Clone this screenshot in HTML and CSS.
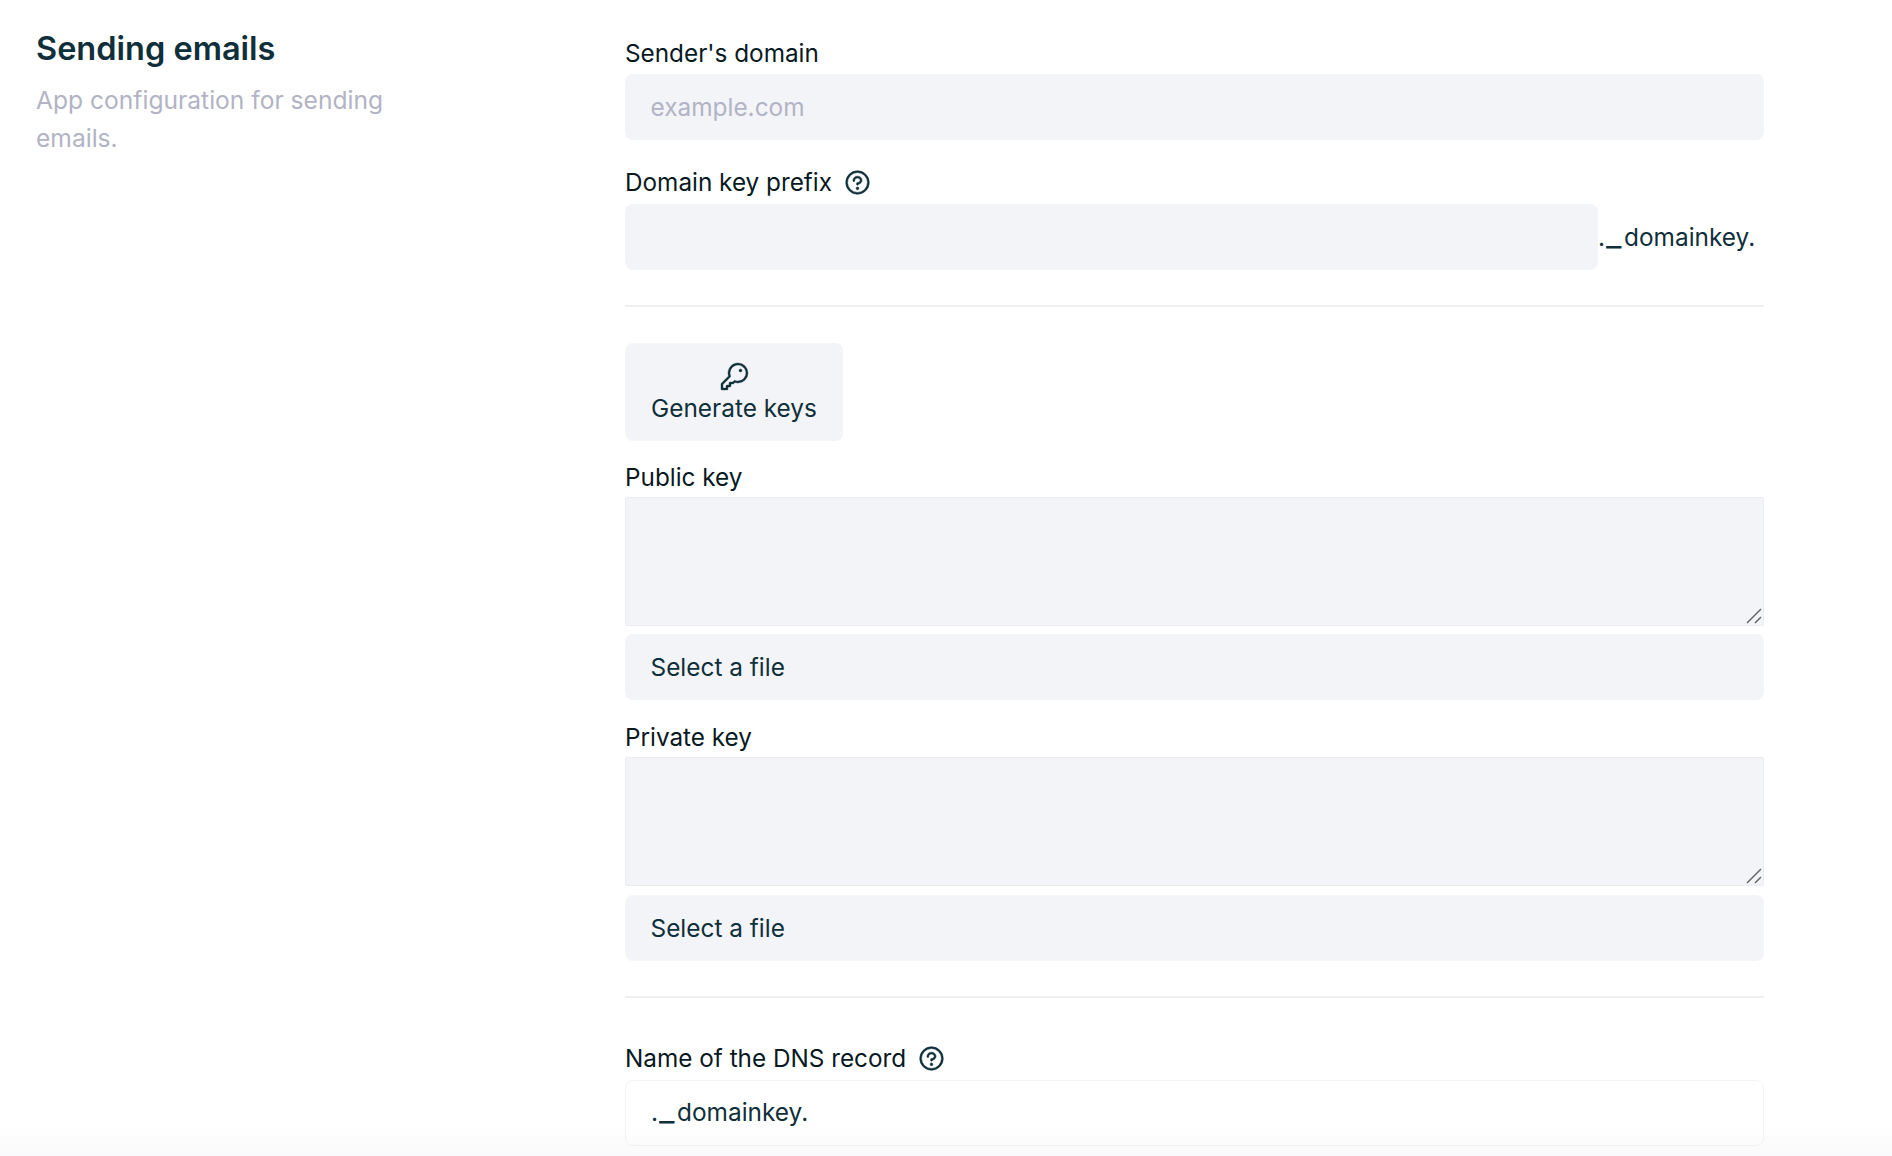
FILE: index.html
```html
<!DOCTYPE html>
<html lang="en">
<head>
<meta charset="utf-8">
<title>Sending emails</title>
<link rel="stylesheet" href="styles.css">
</head>
<body>
<main class="page">
  <aside class="intro">
    <h1 class="intro-title">Sending emails</h1>
    <p class="intro-text">App configuration for sending emails.</p>
  </aside>
  <form class="form">
    <div class="field field-first">
      <label class="label">Sender's domain</label>
      <input class="input" type="text" placeholder="example.com">
    </div>
    <div class="field field-prefix">
      <label class="label">Domain key prefix
        <svg class="help" viewBox="0 0 256 256" aria-hidden="true"><path d="M140,180a12,12,0,1,1-12-12A12,12,0,0,1,140,180ZM128,72c-22.06,0-40,16.15-40,36v4a8,8,0,0,0,16,0v-4c0-11,10.77-20,24-20s24,9,24,20-10.77,20-24,20a8,8,0,0,0-8,8v8a8,8,0,0,0,16,0v-.72c18.24-3.35,32-17.9,32-35.28C168,88.15,150.06,72,128,72Zm104,56A104,104,0,1,1,128,24,104.11,104.11,0,0,1,232,128Zm-16,0a88,88,0,1,0-88,88A88.1,88.1,0,0,0,216,128Z"/></svg>
      </label>
      <div class="input-row">
        <input class="input input-grow" type="text">
        <span class="suffix">.<span class="wide">_</span>domainkey.</span>
      </div>
    </div>
    <hr class="divider divider-first">
    <button class="generate" type="button">
      <svg class="key" viewBox="0 0 256 256" aria-hidden="true"><path d="M160,16A80.07,80.07,0,0,0,83.91,120.78L26.34,178.34A8,8,0,0,0,24,184v40a8,8,0,0,0,8,8H72a8,8,0,0,0,8-8V208H96a8,8,0,0,0,8-8V184h16a8,8,0,0,0,5.66-2.34l9.56-9.57A79.73,79.73,0,0,0,160,176h.1A80,80,0,0,0,160,16Zm0,144a63.7,63.7,0,0,1-23.65-4.51,8,8,0,0,0-8.84,1.68L116.69,168H96a8,8,0,0,0-8,8v16H72a8,8,0,0,0-8,8v16H40V187.31l58.83-58.82a8,8,0,0,0,1.68-8.84A64,64,0,1,1,160,160Zm32-84a12,12,0,1,1-12-12A12,12,0,0,1,192,76Z"/></svg>
      <span>Generate keys</span>
    </button>
    <div class="field field-key field-public">
      <label class="label label-tight">Public key</label>
      <div class="textarea-wrap">
        <textarea class="textarea"></textarea>
        <svg class="grip" viewBox="0 0 20 20" aria-hidden="true"><path d="M3 17 17 3M11 17l6-6"/></svg>
      </div>
      <div class="file">Select a file</div>
    </div>
    <div class="field field-key field-private">
      <label class="label label-tight">Private key</label>
      <div class="textarea-wrap">
        <textarea class="textarea"></textarea>
        <svg class="grip" viewBox="0 0 20 20" aria-hidden="true"><path d="M3 17 17 3M11 17l6-6"/></svg>
      </div>
      <div class="file">Select a file</div>
    </div>
    <hr class="divider divider-second">
    <div class="field field-dns">
      <label class="label">Name of the DNS record
        <svg class="help" viewBox="0 0 256 256" aria-hidden="true"><path d="M140,180a12,12,0,1,1-12-12A12,12,0,0,1,140,180ZM128,72c-22.06,0-40,16.15-40,36v4a8,8,0,0,0,16,0v-4c0-11,10.77-20,24-20s24,9,24,20-10.77,20-24,20a8,8,0,0,0-8,8v8a8,8,0,0,0,16,0v-.72c18.24-3.35,32-17.9,32-35.28C168,88.15,150.06,72,128,72Zm104,56A104,104,0,1,1,128,24,104.11,104.11,0,0,1,232,128Zm-16,0a88,88,0,1,0-88,88A88.1,88.1,0,0,0,216,128Z"/></svg>
      </label>
      <div class="readonly">.<span class="wide">_</span>domainkey.</div>
    </div>
  </form>
</main>
<div class="fade"></div>
</body>
</html>
```
FILE: styles.css
```css
* {
  box-sizing: border-box;
}

html,
body {
  margin: 0;
  height: 100%;
  overflow: hidden;
  background: #fff;
}

body {
  font-family: Inter, "Noto Sans", sans-serif;
  font-size: 24.4px;
  color: #0f2f3a;
}

.page {
  display: flex;
  padding: 0 128px 0 36px;
}

.intro {
  width: 589px;
  flex: none;
  padding-top: 30px;
}

.intro-title {
  margin: 0;
  font-size: 32.5px;
  line-height: 38px;
  font-weight: 600;
  color: #0f2f3a;
}

.intro-text {
  margin: 13px 0 0;
  width: 370px;
  font-size: 24.6px;
  line-height: 38px;
  color: #b2b3c4;
}

.form {
  width: 1139px;
  flex: none;
  padding-top: 37px;
}

.field-prefix {
  margin-top: 26px;
}

.field-public {
  margin-top: 20px;
}

.field-private {
  margin-top: 21px;
}

.label {
  display: flex;
  align-items: center;
  gap: 11px;
  height: 32px;
  margin-bottom: 5px;
  line-height: 32px;
  font-size: 24.3px;
  color: #08191f;
}

.label-tight {
  margin-bottom: 4px;
}

.field-prefix .label,
.field-dns .label {
  margin-bottom: 6px;
}

.help {
  width: 29px;
  height: 29px;
  fill: #0f2f3a;
  stroke: #0f2f3a;
  stroke-width: 5;
}

.input,
.textarea,
.file,
.readonly,
.generate {
  font: inherit;
  color: inherit;
  border-radius: 8px;
}

.input {
  display: block;
  width: 100%;
  height: 66px;
  padding: 0 25.5px;
  border: 0;
  outline: 0;
  background: #f3f4f8;
}

.input::placeholder {
  color: #b2b3c4;
  opacity: 1;
}

.input-row {
  display: flex;
  align-items: center;
}

.input-grow {
  width: 973px;
  flex: none;
}

.suffix {
  white-space: nowrap;
}

.wide {
  display: inline-block;
  width: 18px;
  margin-left: 1px;
  font-weight: 600;
  transform: scaleX(1.35);
  transform-origin: left center;
}

.divider {
  height: 2px;
  margin: 0;
  border: 0;
  background: #eeeef3;
}

.divider-first {
  margin: 35px 0 36px;
}

.divider-second {
  margin: 35px 0 44px;
}

.generate {
  display: flex;
  flex-direction: column;
  align-items: center;
  justify-content: center;
  width: 218px;
  height: 98px;
  padding: 0;
  border: 0;
  background: #f3f4f8;
}

.key {
  width: 32px;
  height: 32px;
  fill: #0f2f3a;
  stroke: #0f2f3a;
  stroke-width: 3;
}

.generate span {
  line-height: 30px;
}

.textarea-wrap {
  position: relative;
  height: 129px;
  margin-bottom: 9px;
}

.field-public .textarea-wrap {
  margin-bottom: 8px;
}

.textarea {
  display: block;
  width: 100%;
  height: 100%;
  border: 1px solid #ebecf1;
  background: #f3f4f8;
  outline: 0;
  resize: none;
  border-radius: 2px;
}

.grip {
  position: absolute;
  right: 0;
  bottom: 0;
  width: 20px;
  height: 20px;
  fill: none;
  stroke: #666;
  stroke-width: 1.5;
}

.file {
  display: flex;
  align-items: center;
  height: 66px;
  padding: 0 25.5px;
  background: #f3f4f8;
}

.readonly {
  display: flex;
  align-items: center;
  height: 66px;
  padding: 0 25px 2px;
  border: 1px solid #f2f3f6;
  background: #fff;
}

.fade {
  position: fixed;
  left: 0;
  right: 0;
  bottom: 0;
  height: 32px;
  background: linear-gradient(to bottom, rgba(240, 240, 244, 0), rgba(240, 240, 244, 0.35));
  pointer-events: none;
}
```
